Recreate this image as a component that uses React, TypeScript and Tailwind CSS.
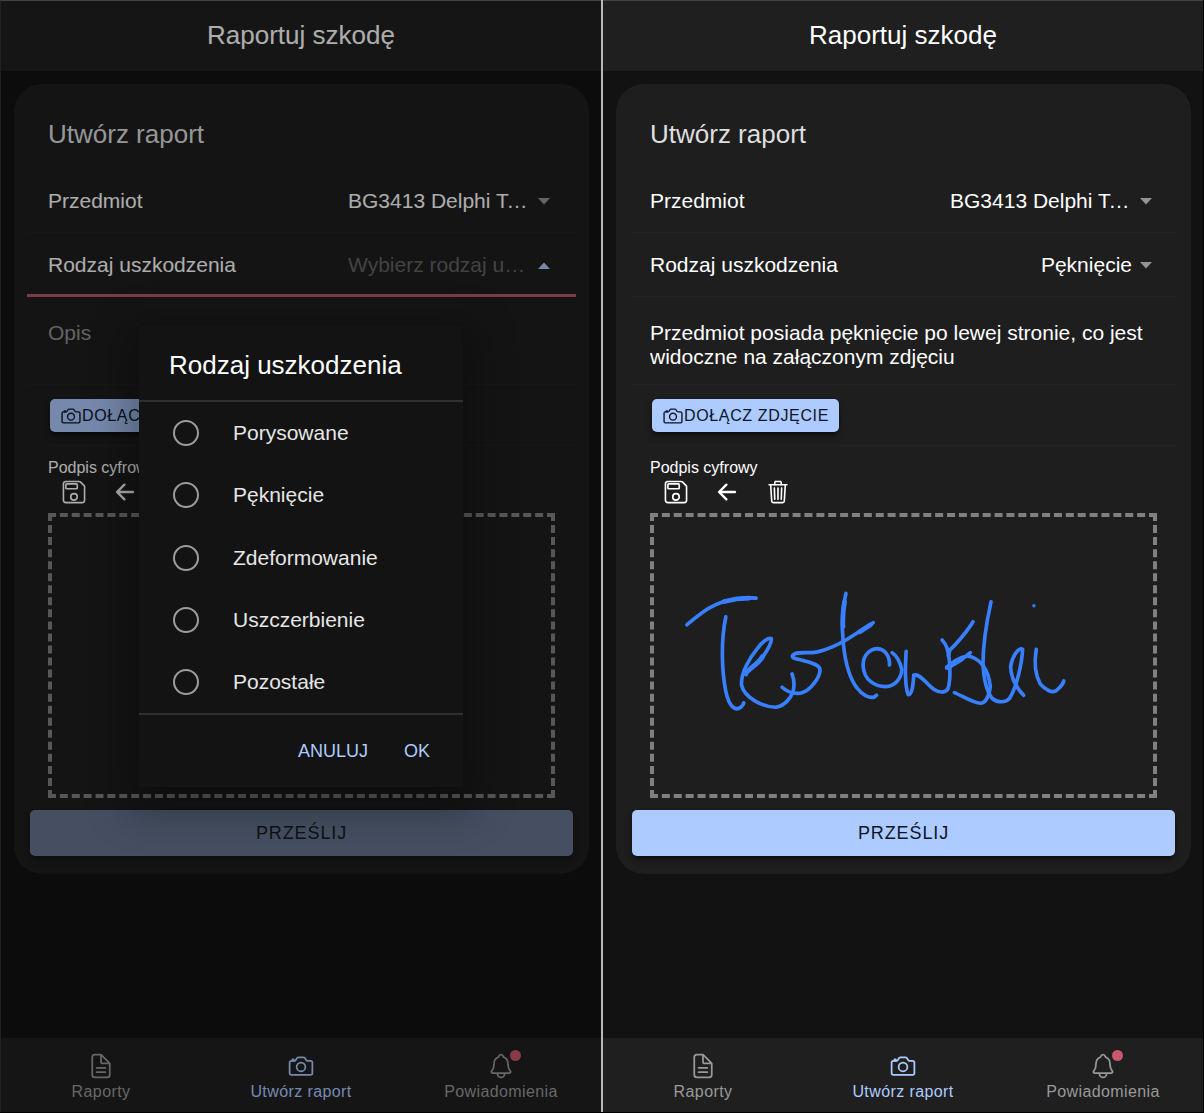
import { useId } from "react";
import type { ReactNode } from "react";
import {
  IoArrowBack,
  IoCameraOutline,
  IoDocumentTextOutline,
  IoNotificationsOutline,
  IoSaveOutline,
  IoTrashOutline,
} from "react-icons/io5";

const DAMAGE_KINDS = ["Porysowane", "Pęknięcie", "Zdeformowanie", "Uszczerbienie", "Pozostałe"];

function Caret({ open }: { open?: boolean }) {
  return (
    <svg
      viewBox="0 0 12 7"
      className={
        open ? "mt-0.5 h-[7px] w-3 shrink-0 rotate-180 text-[#aecbff]" : "mt-0.5 h-[7px] w-3 shrink-0 text-[#949494]"
      }
      aria-hidden="true"
    >
      <path d="M0 0h12L6 6.5z" fill="currentColor" />
    </svg>
  );
}

function SelectRow({
  label,
  value,
  options,
  placeholder,
  open,
  invalid,
}: {
  label: string;
  value: string;
  options: string[];
  placeholder?: string;
  open?: boolean;
  invalid?: boolean;
}) {
  const id = useId();
  return (
    <div
      className={
        invalid
          ? "flex h-16 items-center justify-between border-b-3 border-[#b65a6a] pt-0.5 pr-[26px] pl-[21px]"
          : "flex h-16 items-center justify-between border-b border-[#222222] pr-[26px] pl-[21px]"
      }
    >
      <label htmlFor={id} className="text-[21px] leading-7">
        {label}
      </label>
      <div className="flex items-center gap-2">
        <select
          id={id}
          defaultValue={value}
          className={
            placeholder
              ? "max-w-[182px] appearance-none truncate bg-transparent text-[21px] leading-7 text-[#646464] outline-none"
              : "field-sizing-content max-w-[182px] appearance-none truncate bg-transparent text-[21px] leading-7 text-white outline-none"
          }
        >
          {placeholder && <option value="">{placeholder}</option>}
          {options.map((o) => (
            <option key={o} value={o}>
              {o}
            </option>
          ))}
        </select>
        <Caret open={open} />
      </div>
    </div>
  );
}

function Signature() {
  return (
    <svg
      viewBox="-21 -159 1500 831"
      className="h-full w-full"
      fill="none"
      stroke="#3880ff"
      strokeWidth="11"
      strokeLinecap="round"
      strokeLinejoin="round"
      role="img"
      aria-label="Podpis"
    >
      <path d="M78 164C120 130 150 105 190 94S255 82 286 84" />
      <path d="M195 140C180 210 182 300 195 365C205 410 222 425 240 412C246 407 248 402 249 399" />
      <path d="M256 314C255 300 285 290 305 262C322 238 332 215 332 206C325 200 305 215 290 235C265 265 240 310 242 345C250 385 310 412 345 412C370 410 390 385 397 365C402 345 399 325 394 312" />
      <path d="M256 308C275 288 292 282 305 260" strokeWidth="15" />
      <path d="M364 352C375 362 395 372 418 370C450 365 478 320 478 300C478 285 455 280 430 272C410 268 393 265 395 258C400 245 430 248 455 248C490 245 520 228 548 215L638 158" />
      <path d="M556 70C545 110 543 170 548 220C555 290 570 330 590 355C605 375 625 385 640 382L648 376" />
      <path d="M190 94C220 86 245 84 265 84M552 95C547 120 546 145 547 170M598 185L630 164" strokeWidth="14" />
      <g transform="translate(630 0)">
        <path d="M57 285C58 260 45 238 20 236C-8 238 -25 262 -22 292C-18 330 12 350 45 350C75 348 92 325 94 300C90 280 80 258 65 248" />
        <path d="M107 244C104 290 104 350 113 374C125 375 128 345 130 315C150 310 165 340 190 358C205 368 222 370 232 358C242 330 240 270 230 235C226 222 220 215 215 210" />
        <path d="M308 155C290 185 255 225 238 240L234 258" />
        <path d="M300 248C280 265 250 285 229 294C240 280 265 262 290 258C330 262 355 300 360 350C356 380 345 400 330 400C310 400 275 378 252 368" />
        <path d="M231 292L272 268" strokeWidth="15" />
        <path d="M362 95C350 150 338 210 338 280C340 330 350 365 365 385C380 398 405 400 418 385C440 350 455 280 457 238C445 230 425 260 421 290C422 325 440 355 460 376" />
        <path d="M498 238C492 275 492 310 510 342C525 360 545 370 558 362C570 352 578 345 581 333" />
        <circle cx="491" cy="107" r="5" fill="#3880ff" stroke="none" />
      </g>
    </svg>
  );
}

function Tab({ icon, label, active, badge }: { icon: ReactNode; label: string; active?: boolean; badge?: boolean }) {
  return (
    <a
      href="#"
      aria-current={active ? "page" : undefined}
      className={
        active
          ? "flex flex-1 flex-col items-center justify-center gap-0.5 pt-1 text-[#aecbff]"
          : "flex flex-1 flex-col items-center justify-center gap-0.5 pt-1 text-[#999999]"
      }
    >
      <span className="relative text-[28px]">
        {icon}
        {badge && <span className="absolute -top-0.5 -right-1.5 size-[11px] rounded-full bg-[#c8586b]" />}
      </span>
      <span className="text-base leading-5 tracking-wide">{label}</span>
    </a>
  );
}

function Screen({
  kind,
  description,
  signed,
  children,
}: {
  kind: string;
  description: string;
  signed?: boolean;
  children?: ReactNode;
}) {
  return (
    <section className="relative flex min-w-0 flex-1 flex-col bg-[#121212]">
      <header className="flex h-[70px] items-center justify-center bg-[#1f1f1f] pb-0.5">
        <h1 className="text-[26px] leading-9">Raportuj szkodę</h1>
      </header>

      <main className="flex-1 pt-[13px] pr-3 pb-6 pl-[13px]">
        <form className="rounded-[28px] bg-[#1e1e1e] px-[13px] pt-8 pb-[18px]" onSubmit={(e) => e.preventDefault()}>
          <h2 className="mb-[17px] pl-[21px] text-[26px] leading-9 text-[#dedede]">Utwórz raport</h2>

          <SelectRow
            label="Przedmiot"
            value="BG3413 Delphi Technologies"
            options={["BG3413 Delphi Technologies"]}
          />
          <SelectRow
            label="Rodzaj uszkodzenia"
            value={kind}
            options={DAMAGE_KINDS}
            placeholder={kind ? undefined : "Wybierz rodzaj uszkodzenia"}
            open={!kind}
            invalid={!kind}
          />

          <div className="flex border-b border-[#222222] pt-6 pr-3 pb-[15px] pl-[21px]">
            <textarea
              aria-label="Opis"
              placeholder="Opis"
              rows={2}
              defaultValue={description}
              className="w-full resize-none overflow-hidden bg-transparent text-[21px] leading-6 outline-none placeholder:text-[#929292]"
            />
          </div>

          <div className="ml-[21px] border-b border-[#222222] pt-3.5 pb-[13px] pl-0.5">
            <button
              type="button"
              className="flex h-[33px] items-center rounded-[5px] bg-[#aecbff] px-2.5 text-base tracking-[0.04em] text-[#0b1529] shadow-md shadow-black/50"
            >
              <IoCameraOutline className="text-[22px]" />
              DOŁĄCZ ZDJĘCIE
            </button>
          </div>

          <div className="px-[21px] pt-3">
            <p className="text-base leading-5">Podpis cyfrowy</p>
            <div className="flex items-center pt-px text-[26px]">
              <button type="button" aria-label="Zapisz" className="flex w-[51px] justify-center">
                <IoSaveOutline />
              </button>
              <button type="button" aria-label="Cofnij" className="flex w-[51px] justify-center">
                <IoArrowBack />
              </button>
              <button type="button" aria-label="Usuń" className="flex w-[51px] justify-center">
                <IoTrashOutline />
              </button>
            </div>
            <div className="mt-2 h-[285px] border-4 border-dashed border-[#808080]">{signed && <Signature />}</div>
          </div>

          <div className="mt-3 px-[3px]">
            <button
              type="submit"
              disabled={!signed}
              className="h-[46px] w-full rounded-[5px] bg-[#aecbff] text-lg tracking-wider text-[#0b1529] shadow-md shadow-black/50 disabled:opacity-50"
            >
              PRZEŚLIJ
            </button>
          </div>
        </form>
      </main>

      <nav className="flex h-[74px] bg-[#1f1f1f]">
        <Tab icon={<IoDocumentTextOutline />} label="Raporty" />
        <Tab icon={<IoCameraOutline />} label="Utwórz raport" active />
        <Tab icon={<IoNotificationsOutline />} label="Powiadomienia" badge />
      </nav>

      {children}
    </section>
  );
}

function DamageDialog() {
  return (
    <div className="absolute inset-0 flex items-center justify-center bg-black/32">
      <div
        role="dialog"
        aria-label="Rodzaj uszkodzenia"
        className="w-[324px] bg-[#131313] shadow-[0_12px_40px_12px_rgba(0,0,0,0.3)]"
      >
        <h2 className="px-[30px] pt-[22px] pb-[18px] text-[26px] leading-[34px]">Rodzaj uszkodzenia</h2>
        <div className="flex h-[315px] flex-col border-y-2 border-[#2f2f2f]">
          {DAMAGE_KINDS.map((k) => (
            <label key={k} className="flex flex-1 items-center gap-[34px] pl-[34px] text-[21px] leading-7 text-[#e6e6e6]">
              <input
                type="radio"
                name="damage-kind"
                value={k}
                className="size-[26px] appearance-none rounded-full border-2 border-[#9c9c9c] checked:border-[#aecbff]"
              />
              {k}
            </label>
          ))}
        </div>
        <div className="flex h-[72px] items-center justify-end gap-9 pr-[33px] text-lg text-[#aecbff]">
          <button type="button">ANULUJ</button>
          <button type="button">OK</button>
        </div>
      </div>
    </div>
  );
}

export default function App() {
  return (
    <div className="flex min-h-screen border-r border-b border-black bg-[#121212] font-['Liberation_Sans',Arial,sans-serif] text-white">
      <div className="flex min-w-0 flex-1 border-t border-l border-t-[#444444] border-l-[#222222]">
        <Screen kind="" description="">
          <DamageDialog />
        </Screen>
      </div>
      <div className="w-0.5 bg-[#b8b8b8]" />
      <div className="flex min-w-0 flex-1 border-t border-[#444444]">
        <Screen
          kind="Pęknięcie"
          description="Przedmiot posiada pęknięcie po lewej stronie, co jest widoczne na załączonym zdjęciu"
          signed
        />
      </div>
    </div>
  );
}
